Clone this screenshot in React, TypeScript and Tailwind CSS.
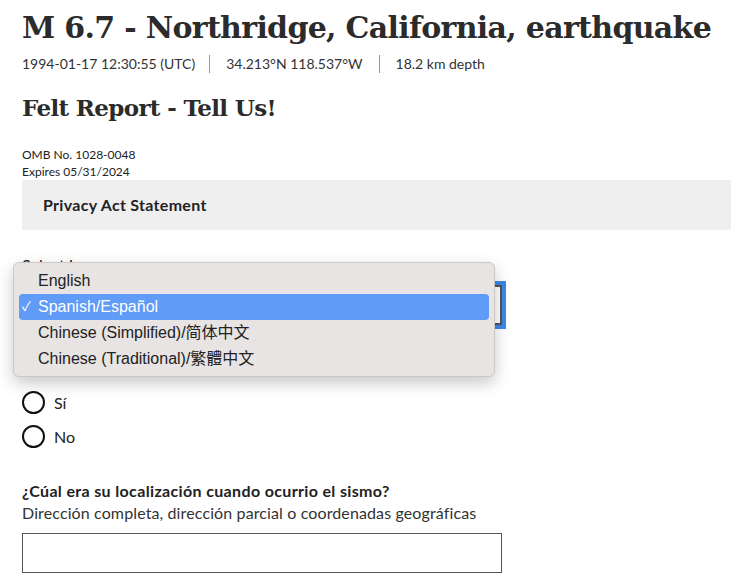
import React from "react";

export default function App() {
  const serif = { fontFamily: '"DejaVu Serif", serif' };
  return (
    <div
      className="relative w-[731px] h-[586px] overflow-hidden bg-white text-[#222]"
      style={{ fontFamily: 'Lato, "Noto Sans", sans-serif' }}
    >
      <div className="pl-[22px]">
        <h1
          className="pt-[9px] text-[30px] leading-[38px] font-bold text-[#2b2b2b] whitespace-nowrap tracking-[-0.68px]"
          style={serif}
        >
          M 6.7 - Northridge, California, earthquake
        </h1>
        <div className="mt-[8px] flex items-center text-[14px] leading-[18px] text-[#333]">
          <span className="pr-[14px]">1994-01-17 12:30:55 (UTC)</span>
          <span className="border-l border-[#999] px-[16px]">34.213°N 118.537°W</span>
          <span className="border-l border-[#999] pl-[16px]">18.2 km depth</span>
        </div>
        <h2
          className="mt-[19px] text-[23px] leading-[32px] font-bold text-[#2b2b2b] tracking-[-0.65px]"
          style={serif}
        >
          Felt Report - Tell Us!
        </h2>
        <div className="mt-[22px] text-[12px] leading-[17px] text-[#222]">
          <div>OMB No. 1028-0048</div>
          <div>Expires 05/31/2024</div>
        </div>
        <div className="h-[50px] bg-[#efefef] flex items-center pl-[21px] text-[16px] font-bold text-[#222] tracking-[0.3px]">
          Privacy Act Statement
        </div>
        <div className="w-[480px]">
          <label className="block mt-[25px] text-[16px] leading-[20px]">Select Language</label>
          <div className="mt-[10px] h-[40px] border-2 border-[#555] bg-white outline-4 outline-[#3d87e6]"></div>
          <div className="mt-[24px] h-[20px]"></div>
          <div className="mt-[22px] flex flex-col gap-[11px]">
            {["Sí", "No"].map((t) => (
              <div key={t} className="flex items-center h-[23px]">
                <span className="w-[23px] h-[23px] rounded-full border-2 border-[#111] bg-white"></span>
                <span className="ml-[9px] text-[16px]">{t}</span>
              </div>
            ))}
          </div>
          <div className="mt-[32px] text-[16px] font-bold leading-[22px] tracking-[0.35px] whitespace-nowrap">
            ¿Cúal era su localización cuando ocurrio el sismo?
          </div>
          <div className="text-[16px] leading-[22px] text-[#333] tracking-[0.12px] whitespace-nowrap">
            Dirección completa, dirección parcial o coordenadas geográficas
          </div>
          <div className="mt-[9px] h-[40px] border border-[#555] bg-white"></div>
        </div>
      </div>

      <div
        className="absolute left-[13px] top-[262px] w-[482px] h-[115px] rounded-[6px] bg-[#e7e4e3] border border-[#cbc8c7] shadow-[0_6px_16px_rgba(0,0,0,0.22)] px-[5px] pt-[5px] text-[16px] text-[#222]"
        style={{ fontFamily: '"Liberation Sans", "Noto Sans CJK SC", sans-serif' }}
      >
        <div className="h-[26px] flex items-center pl-[19px]">English</div>
        <div className="h-[26px] flex items-center rounded-[4px] bg-[#5f9bf7] text-white">
          <span className="w-[19px] pl-[3px] text-[13px]">✓</span>
          <span>Spanish/Español</span>
        </div>
        <div className="h-[26px] flex items-center pl-[19px]">Chinese (Simplified)/简体中文</div>
        <div className="h-[26px] flex items-center pl-[19px]">Chinese (Traditional)/繁體中文</div>
      </div>
    </div>
  );
}
